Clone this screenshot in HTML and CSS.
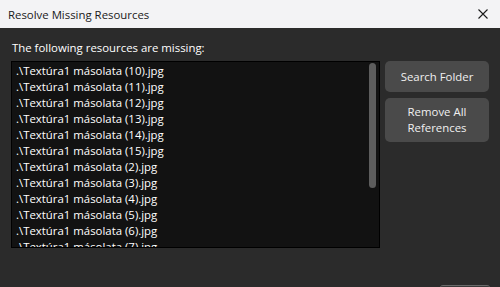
FILE: index.html
```html
<!DOCTYPE html>
<html lang="en">
<head>
  <meta charset="UTF-8">
  <title>Resolve Missing Resources</title>
  <link rel="stylesheet" href="styles.css">
</head>
<body>

  <div class="window">
    <div class="titlebar">
      <span class="title">Resolve Missing Resources</span>
      <button class="close" type="button" aria-label="Close">
        <svg width="10" height="10" viewBox="0 0 10 10">
          <path d="M0.5 0.5 L9.5 9.5 M9.5 0.5 L0.5 9.5" stroke="#1a1a1a" stroke-width="1.1" fill="none"/>
        </svg>
      </button>
    </div>

    <div class="content">
      <div class="label">The following resources are missing:</div>
      <div class="main">
        <div class="listbox">
          <ul id="resourceList" class="items">
            <!-- Rows will be inserted here -->
          </ul>
          <div class="scrollbar"><div class="thumb"></div></div>
        </div>
        <div class="actions">
          <button type="button" class="btn">Search Folder</button>
          <button type="button" class="btn">Remove All<br>References</button>
        </div>
      </div>
    </div>
    <div class="footer"><div class="footer-btn"></div></div>
  </div>

  <script>
    const missing = ["10", "11", "12", "13", "14", "15", "2", "3", "4", "5", "6", "7"];
    const list = document.getElementById('resourceList');

    missing.forEach(n => {
      const li = document.createElement('li');
      li.textContent = `.\\Textúra1 másolata (${n}).jpg`;
      list.appendChild(li);
    });
  </script>

</body>
</html>
```

FILE: styles.css
```css
body {
  margin: 0;
  font-family: "Open Sans", "Noto Sans", sans-serif;
  background-color: #2b2b2b;
}

.window {
  width: 500px;
  height: 287px;
  overflow: hidden;
  display: flex;
  flex-direction: column;
}

.titlebar {
  height: 28px;
  background-color: #f3f3f5;
  display: flex;
  align-items: center;
  justify-content: space-between;
  padding-left: 8px;
  flex-shrink: 0;
}

.title {
  font-size: 11.4px;
  color: #1a1a1a;
}

.close {
  width: 46px;
  height: 28px;
  border: none;
  background: transparent;
  display: flex;
  align-items: center;
  justify-content: center;
  padding: 0;
  margin-right: -6px;
}

.content {
  padding: 11px 11px 0 11px;
  color: #ffffff;
}

.label {
  font-size: 11.4px;
  height: 22px;
  line-height: 17px;
  padding-left: 1px;
}

.main {
  display: flex;
  gap: 5px;
  align-items: flex-start;
}

.listbox {
  width: 367px;
  height: 185px;
  border: 1px solid #000000;
  background-color: #121212;
  position: relative;
  overflow: hidden;
}

.items {
  list-style: none;
  margin: 0;
  padding: 1px 0 0 4px;
}

.items li {
  font-size: 11.4px;
  line-height: 16px;
  height: 16px;
  white-space: nowrap;
  color: #ffffff;
}

.scrollbar {
  position: absolute;
  top: 0;
  right: 0;
  width: 12px;
  height: 100%;
}

.thumb {
  margin: 1px 0 0 2px;
  width: 7px;
  height: 125px;
  background-color: #5d5d5d;
  border-radius: 4px;
}

.actions {
  display: flex;
  flex-direction: column;
  gap: 6px;
}

.btn {
  width: 104px;
  border: none;
  border-radius: 5px;
  background-color: #4a4a4a;
  color: #f0f0f0;
  font-family: "Open Sans", "Noto Sans", sans-serif;
  font-size: 11.4px;
  line-height: 16px;
  padding: 7px 4px;
}

.btn:first-child {
  height: 31px;
}

.btn:last-child {
  height: 44px;
  padding: 5px 4px;
}

.footer {
  display: flex;
  justify-content: flex-end;
  padding-top: 37px;
  padding-right: 10px;
}

.footer-btn {
  width: 50px;
  height: 8px;
  border-top: 1px solid #6a6a6a;
  background-color: #3a3a3a;
  border-radius: 3px 3px 0 0;
}
```
